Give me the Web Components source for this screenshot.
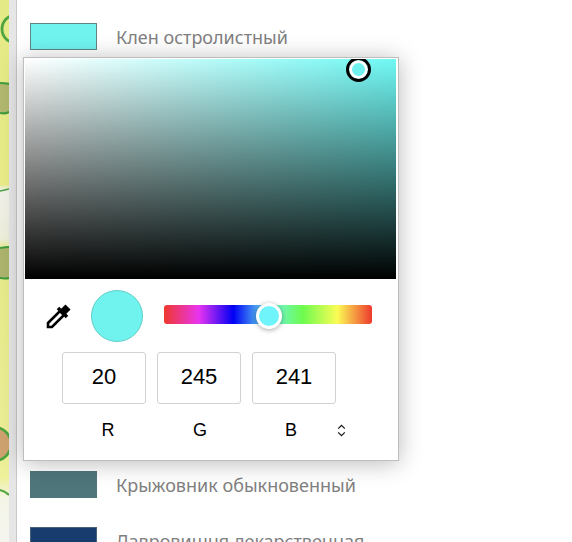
<!DOCTYPE html>
<html>
<head>
<meta charset="utf-8">
<style>
  html, body { margin: 0; height: 100%; overflow: hidden; background: #fff; }
</style>
</head>
<body>
<legend-page>
  <map-strip slot="map"></map-strip>
  <legend-row color="#70f3ef" edge="#5e8585" style="margin-bottom:392px">Клен остролистный</legend-row>
  <legend-row color="#4f767b" edge="#4f767b">Крыжовник обыкновенный</legend-row>
  <legend-row color="#193c6e" edge="#49607f">Лавровишня лекарственная</legend-row>
  <color-picker slot="overlay" r="20" g="245" b="241"></color-picker>
</legend-page>

<script>
class LegendPage extends HTMLElement {
  connectedCallback() {
    this.attachShadow({ mode: 'open' }).innerHTML = `
      <style>
        :host { display: flex; position: relative; width: 572px; height: 542px; overflow: hidden; }
        .rail { flex: none; width: 7px; background: #e6e6e6; border-right: 1px solid #c9c9c9; }
        .list { display: flex; flex-direction: column; gap: 29px; padding: 23px 0 0 13px; }
      </style>
      <slot name="map"></slot>
      <div class="rail"></div>
      <div class="list"><slot></slot></div>
      <slot name="overlay"></slot>`
  }
}

class MapStrip extends HTMLElement {
  connectedCallback() {
    this.attachShadow({ mode: 'open' }).innerHTML = `
      <style>
        :host { display: block; flex: none; width: 9px; height: 542px; }
        svg { display: block; }
      </style>
      <svg width="9" height="542" viewBox="0 0 9 542">
        <defs>
          <linearGradient id="ground" x1="0" y1="0" x2="0" y2="1">
            <stop offset="0" stop-color="#e4ea86"/>
            <stop offset=".34" stop-color="#e9ec88"/>
            <stop offset=".35" stop-color="#f1f1ea"/>
            <stop offset=".44" stop-color="#eeeedc"/>
            <stop offset=".46" stop-color="#e7ea88"/>
            <stop offset=".88" stop-color="#eef09a"/>
            <stop offset=".92" stop-color="#f4f5e6"/>
            <stop offset="1" stop-color="#f5f5f0"/>
          </linearGradient>
        </defs>
        <rect width="9" height="542" fill="url(#ground)"/>
        <circle cx="16" cy="29" r="14" fill="#e4ea86" stroke="#4ea53f" stroke-width="2.8"/>
        <path d="M0 84H9V113H0Z" fill="#b2b86f"/>
        <path d="M0 83Q5 83 9 84M0 113Q5 114 9 112" fill="none" stroke="#3f9c3f" stroke-width="2.2"/>
        <path d="M0 191Q5 190 9 189" fill="none" stroke="#4a9f45" stroke-width="1.6"/>
        <path d="M0 248H9V278H0Z" fill="#adb46d"/>
        <path d="M0 248Q5 247 9 247M0 278Q5 279 9 278" fill="none" stroke="#3f9c3f" stroke-width="2.2"/>
        <circle cx="-6" cy="444" r="17" fill="#cfa36f" stroke="#4ea53f" stroke-width="2.6"/>
        <path d="M0 490Q5 491 9 495" fill="none" stroke="#4ea53f" stroke-width="2"/>
      </svg>`
  }
}

class LegendRow extends HTMLElement {
  connectedCallback() {
    this.attachShadow({ mode: 'open' }).innerHTML = `
      <style>
        :host { display: flex; align-items: center; gap: 19px; height: 27px; flex: none; }
        .swatch { box-sizing: border-box; width: 67px; height: 27px; border: 1px solid; }
        .name { font: 18px/27px "Noto Sans", sans-serif; color: #808080; white-space: nowrap; position: relative; top: 1px; }
      </style>
      <div class="swatch" style="background:${this.getAttribute('color')};border-color:${this.getAttribute('edge')}"></div>
      <div class="name"><slot></slot></div>`
  }
}

class ColorChannel extends HTMLElement {
  connectedCallback() {
    const nudge = this.getAttribute('nudge') || 0
    this.attachShadow({ mode: 'open' }).innerHTML = `
      <style>
        :host { display: flex; flex-direction: column; align-items: center; gap: 16px; width: 84px; flex: none; color: #000; }
        .box { box-sizing: border-box; width: 84px; height: 52px; padding-bottom: 2px; border: 1px solid #d2d2d2; border-radius: 3px;
               display: flex; align-items: center; justify-content: center; font: 22px "Liberation Sans", Arial, sans-serif; }
        .label { font: 18px/20px "Liberation Sans", Arial, sans-serif; position: relative; left: ${nudge}px; }
      </style>
      <div class="box">${this.getAttribute('value')}</div>
      <div class="label">${this.getAttribute('label')}</div>`
  }
}

class ColorPicker extends HTMLElement {
  connectedCallback() {
    const rgb = `rgb(112,243,239)`
    const [r, g, b] = ['r', 'g', 'b'].map(k => this.getAttribute(k))
    this.attachShadow({ mode: 'open' }).innerHTML = `
      <style>
        :host {
          position: absolute; left: 23px; top: 57px; width: 376px; height: 404px; box-sizing: border-box;
          background: #fff; border: 1px solid #bdbdbd; padding-top: 1px;
          box-shadow: 0 2px 22px rgba(0,0,0,.28);
        }
        .area {
          position: relative; height: 220px; margin: 0 2px 0 1px; overflow: hidden;
          background:
            linear-gradient(to bottom, rgba(0,0,0,0), #000),
            linear-gradient(to right, #fff, #6ff8f4);
        }
        .area i {
          position: absolute; left: 321px; top: -2px; width: 25px; height: 25px; box-sizing: border-box;
          border-radius: 50%; border: 3px solid #000; background: ${rgb}; box-shadow: inset 0 0 0 3px #fff;
        }
        .tools { display: flex; align-items: center; height: 64px; margin-top: 5px; padding-left: 21px; }
        .dropper { flex: none; width: 26px; height: 26px; display: block; margin-right: 20px; position: relative; left: 1px; }
        .preview { flex: none; width: 52px; height: 52px; box-sizing: border-box; border-radius: 50%; background: ${rgb}; border: 1px solid #5fcfc9; margin-right: 21px; }
        .hue {
          position: relative; flex: none; width: 208px; height: 19px; margin-top: -3px; border-radius: 3px;
          background: linear-gradient(to right, #ee392d, #e934f0 16.67%, #0000f5 33.33%, ${rgb} 50%, #6dfb4f 66.67%, #fbfc55 83.33%, #ee392d);
        }
        .hue i {
          position: absolute; left: 92px; top: -2px; width: 26px; height: 26px; box-sizing: border-box;
          border-radius: 50%; border: 3px solid #fff; background: #6ff4fb; box-shadow: 0 1px 5px rgba(0,0,0,.35);
        }
        .channels { display: flex; gap: 11px; padding-left: 38px; margin-top: 4px; position: relative; }
        .toggle { position: absolute; left: 313px; top: 72px; width: 9px; height: 13px; display: block; }
      </style>
      <div class="area"><i></i></div>
      <div class="tools">
        <svg class="dropper" viewBox="0 0 26 26">
          <path d="M2 20 14 8l4 4L6 24H2Z" fill="#fff" stroke="#000" stroke-width="2.6" stroke-linejoin="miter"/>
          <path d="M12 5 21 14" stroke="#000" stroke-width="3.6" fill="none"/>
          <path d="M16.5 9.5 22 4" stroke="#000" stroke-width="7.2" fill="none"/>
        </svg>
        <div class="preview"></div>
        <div class="hue"><i></i></div>
      </div>
      <div class="channels">
        <color-channel value="${r}" label="R" nudge="4"></color-channel>
        <color-channel value="${g}" label="G" nudge="1"></color-channel>
        <color-channel value="${b}" label="B" nudge="-3"></color-channel>
        <svg class="toggle" viewBox="0 0 9 13">
          <path d="M1.2 4.6 4.5 1.4 7.8 4.6M1.2 8.4 4.5 11.6 7.8 8.4" fill="none" stroke="#111" stroke-width="1.2"/>
        </svg>
      </div>`
  }
}

customElements.define('legend-page', LegendPage)
customElements.define('map-strip', MapStrip)
customElements.define('legend-row', LegendRow)
customElements.define('color-channel', ColorChannel)
customElements.define('color-picker', ColorPicker)
</script>
</body>
</html>
